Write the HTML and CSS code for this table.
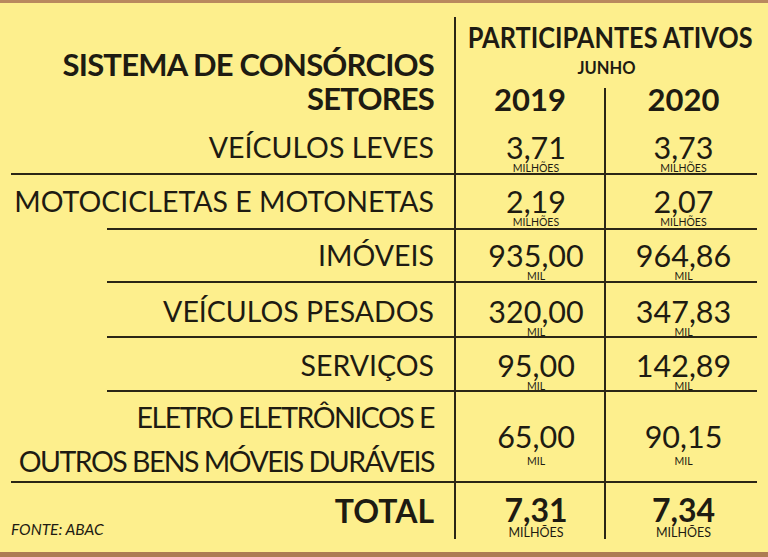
FILE: index.html
```html
<!DOCTYPE html>
<html lang="pt-BR">
<head>
<meta charset="utf-8">
<title>Sistema de Consórcios</title>
<link rel="stylesheet" href="styles.css">
</head>
<body>
<div class="board">
  <header class="head">
    <div class="title">
      <div>SISTEMA DE CONSÓRCIOS</div>
      <div>SETORES</div>
    </div>
    <div class="part">
      <div class="part-title"><span>PARTICIPANTES ATIVOS</span></div>
      <div class="month">JUNHO</div>
      <div class="years">
        <div class="year">2019</div>
        <div class="year y2">2020</div>
      </div>
    </div>
  </header>

  <div class="row r1">
    <div class="label">VEÍCULOS LEVES</div>
    <div class="val c1"><div class="num">3,71</div><div class="unit">MILHÕES</div></div>
    <div class="val c2"><div class="num">3,73</div><div class="unit">MILHÕES</div></div>
  </div>
  <div class="row r2 short">
    <div class="label">MOTOCICLETAS E MOTONETAS</div>
    <div class="val c1"><div class="num">2,19</div><div class="unit">MILHÕES</div></div>
    <div class="val c2"><div class="num">2,07</div><div class="unit">MILHÕES</div></div>
  </div>
  <div class="row r3 short">
    <div class="label">IMÓVEIS</div>
    <div class="val c1"><div class="num">935,00</div><div class="unit">MIL</div></div>
    <div class="val c2"><div class="num">964,86</div><div class="unit">MIL</div></div>
  </div>
  <div class="row r4 short">
    <div class="label">VEÍCULOS PESADOS</div>
    <div class="val c1"><div class="num">320,00</div><div class="unit">MIL</div></div>
    <div class="val c2"><div class="num">347,83</div><div class="unit">MIL</div></div>
  </div>
  <div class="row r5 short">
    <div class="label">SERVIÇOS</div>
    <div class="val c1"><div class="num">95,00</div><div class="unit">MIL</div></div>
    <div class="val c2"><div class="num">142,89</div><div class="unit">MIL</div></div>
  </div>
  <div class="row r6">
    <div class="label">ELETRO ELETRÔNICOS E<br>OUTROS BENS MÓVEIS DURÁVEIS</div>
    <div class="val c1"><div class="num">65,00</div><div class="unit">MIL</div></div>
    <div class="val c2"><div class="num">90,15</div><div class="unit">MIL</div></div>
  </div>
  <div class="row r7 total">
    <div class="label">
      <span class="source">FONTE: ABAC</span>
      <span class="total-label">TOTAL</span>
    </div>
    <div class="val c1"><div class="num">7,31</div><div class="unit">MILHÕES</div></div>
    <div class="val c2"><div class="num">7,34</div><div class="unit">MILHÕES</div></div>
  </div>
</div>
</body>
</html>
```

FILE: styles.css
```css
:root {
  --bg: #fdef8d;
  --ink: #1e1b12;
  --line: #2b2616;
}

* { box-sizing: border-box; }

html, body {
  margin: 0;
  padding: 0;
  background: var(--bg);
}

.board {
  width: 768px;
  height: 557px;
  border-top: 3px solid #b9895e;
  border-bottom: 5px solid #ad7c52;
  background: var(--bg);
  color: var(--ink);
  font-family: Lato, "Open Sans", sans-serif;
  display: flex;
  flex-direction: column;
  overflow: hidden;
}

/* header */
.head {
  display: grid;
  grid-template-columns: 454px 303px;
  height: 117px;
  flex: none;
}

.title {
  padding-top: 44px;
  padding-right: 20px;
  text-align: right;
  font-weight: 700;
  font-size: 31px;
  letter-spacing: -0.8px;
  line-height: 34px;
  white-space: nowrap;
}

.part {
  margin-top: 14px;
  border-left: 2px solid var(--line);
  padding-top: 6px;
  display: flex;
  flex-direction: column;
  min-width: 0;
}

.part-title {
  display: flex;
  justify-content: center;
  padding-left: 8px;
  font-weight: 700;
  font-size: 29px;
  line-height: 28px;
  white-space: nowrap;
}

.part-title span {
  flex: none;
  transform: scaleX(0.873);
}

.month {
  margin-top: 9px;
  text-align: center;
  font-weight: 700;
  font-size: 16.5px;
  line-height: 16px;
}

.years {
  margin-top: 12px;
  height: 32px;
  display: grid;
  grid-template-columns: 148px 1fr;
}

.year {
  text-align: center;
  font-weight: 700;
  font-size: 31px;
  line-height: 22px;
}

.year.y2 {
  border-left: 2px solid var(--line);
  padding-left: 4px;
}

/* rows */
.row {
  display: grid;
  grid-template-columns: minmax(0, 1fr) 150px 153px;
  margin: 0 11px;
  flex: none;
  background: linear-gradient(var(--line), var(--line)) no-repeat right bottom / 100% 2px;
}

.row.short {
  background-size: calc(100% - 96px) 2px;
}

.row > * {
  padding-top: var(--pt);
}

.r1 { height: 55px; --pt: 12px; }
.r2 { height: 55px; --pt: 11px; }
.r3 { height: 53px; --pt: 10px; }
.r4 { height: 55px; --pt: 13px; }
.r5 { height: 54px; --pt: 12px; }
.r6 { height: 91px; --pt: 3px; }
.r7 { height: 55px; --pt: 12px; background: none; }

.label {
  min-width: 0;
  text-align: right;
  padding-right: 20px;
  font-size: 28.5px;
  line-height: 30px;
  white-space: nowrap;
}

.val {
  border-left: 2px solid var(--line);
  text-align: center;
}

.val.c1 { padding-left: 12px; }
.val.c2 { padding-left: 4px; }

.num {
  font-size: 30.5px;
  line-height: 30px;
}

.unit {
  margin-top: 1px;
  font-size: 10.5px;
  line-height: 10px;
}

.r6 .label {
  line-height: 44px;
  letter-spacing: -1.5px;
}

.r6 .val {
  padding-top: 29px;
}

.r6 .unit {
  margin-top: 5px;
}

/* total */
.total .label {
  display: flex;
  justify-content: space-between;
  align-items: flex-start;
  padding-left: 0;
}

.source {
  margin-top: 26px;
  font-style: italic;
  font-size: 15.5px;
  line-height: 16px;
}

.total-label {
  font-weight: 700;
  font-size: 32px;
  line-height: 32px;
}

.total .num {
  font-weight: 700;
  font-size: 32px;
  line-height: 30px;
}

.total .unit {
  margin-top: 2px;
  font-size: 12.5px;
  line-height: 12px;
}
```
